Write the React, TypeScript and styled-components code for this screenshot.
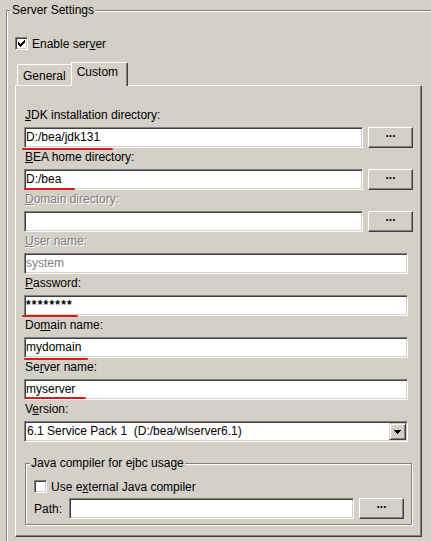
import styled, { createGlobalStyle } from 'styled-components'

const FACE = '#d4d0c8'
const SHADOW = '#808080'
const DARK = '#404040'
const HILITE = '#ffffff'
const MARKER = '#cf1f1f'

const GlobalStyle = createGlobalStyle`
  html, body {
    margin: 0;
    padding: 0;
    background: ${FACE};
  }
  body {
    font-family: 'Liberation Sans', Arial, sans-serif;
    font-size: 12px;
    color: #000;
    overflow: hidden;
  }
`

const Page = styled.div`
  width: 431px;
  height: 541px;
  box-sizing: border-box;
  overflow: hidden;
  padding: 10px 0 0 6px;
`

const GroupBox = styled.div`
  position: relative;
  border: 1px solid ${SHADOW};
  box-shadow: inset 1px 1px 0 ${HILITE}, 1px 1px 0 ${HILITE};
`

const ServerGroup = styled(GroupBox)`
  margin-right: -20px;
  padding: 24px 0 20px 8px;
`

const CompilerGroup = styled(GroupBox)`
  margin: 21px 1px 0 1px;
  padding: 14px 7px 5px 8px;
`

const Caption = styled.span`
  position: absolute;
  top: -8px;
  left: 4px;
  padding: 0 1px;
  line-height: 14px;
  background: ${FACE};
  white-space: nowrap;
`

const Key = styled.span`
  text-decoration: underline;
`

const CheckRow = styled.div`
  display: flex;
  align-items: center;
  gap: 4px;
  height: 17px;
  line-height: 14px;
`

const CheckBox = styled.span`
  flex: none;
  width: 13px;
  height: 13px;
  box-sizing: border-box;
  display: flex;
  align-items: center;
  justify-content: center;
  background: #fff;
  border: 1px solid;
  border-color: ${SHADOW} ${HILITE} ${HILITE} ${SHADOW};
  box-shadow: inset 1px 1px 0 ${DARK}, inset -1px -1px 0 ${FACE};
`

const TabStrip = styled.div`
  display: flex;
  align-items: flex-end;
  height: 23px;
  margin-top: 10px;
  padding-left: 2px;
`

const Tab = styled.div<{ $active?: boolean }>`
  position: relative;
  z-index: ${(p) => (p.$active ? 1 : 0)};
  box-sizing: border-box;
  height: ${(p) => (p.$active ? 24 : 21)}px;
  margin: ${(p) => (p.$active ? '0 0 -1px -2px' : '0')};
  padding: ${(p) => (p.$active ? '2px 9px 0 5px' : '4px 6px 0 5px')};
  line-height: 14px;
  background: ${FACE};
  border-top: 1px solid ${HILITE};
  border-left: 1px solid ${HILITE};
  border-right: 1px solid ${DARK};
  border-radius: 2px 2px 0 0;
  box-shadow: inset -1px 0 0 ${SHADOW};
`

const Panel = styled.div`
  width: 407px;
  box-sizing: border-box;
  padding: 20px 8px 11px 8px;
  border: 1px solid;
  border-color: ${HILITE} ${DARK} ${DARK} ${HILITE};
  box-shadow: inset -1px -1px 0 ${SHADOW};
`

const Field = styled.div`
  display: flex;
  flex-direction: column;
  gap: 5px;
  margin-top: 2px;
`

const Label = styled.div<{ $disabled?: boolean }>`
  height: 14px;
  line-height: 14px;
  padding-left: 1px;
  white-space: nowrap;
  color: ${(p) => (p.$disabled ? SHADOW : '#000')};
  text-shadow: ${(p) => (p.$disabled ? `1px 1px 0 ${HILITE}` : 'none')};
`

const InputRow = styled.div`
  display: flex;
  align-items: center;
  gap: 5px;
`

const InputWrap = styled.div<{ $wide?: boolean }>`
  position: relative;
  flex: 1;
  display: flex;
  margin-right: ${(p) => (p.$wide ? 5 : 0)}px;
`

const TextBox = styled.div<{ $disabled?: boolean; $secret?: boolean }>`
  flex: 1;
  height: 21px;
  box-sizing: border-box;
  padding: 0 1px;
  overflow: hidden;
  line-height: 19px;
  white-space: pre;
  background: #fff;
  color: ${(p) => (p.$disabled ? SHADOW : '#000')};
  font-weight: ${(p) => (p.$secret ? 'bold' : 'normal')};
  letter-spacing: ${(p) => (p.$secret ? '1.2px' : 'normal')};
  border: 1px solid;
  border-color: ${SHADOW} ${HILITE} ${HILITE} ${SHADOW};
  box-shadow: inset 1px 1px 0 ${DARK}, inset -1px -1px 0 ${FACE};
`

const Marker = styled.span<{ $left: number; $width: number; $drop: number }>`
  position: absolute;
  left: ${(p) => p.$left}px;
  bottom: ${(p) => -p.$drop}px;
  width: ${(p) => p.$width}px;
  height: 2px;
  border-radius: 1px;
  background: ${MARKER};
`

const BrowseButton = styled.div`
  flex: none;
  width: 45px;
  height: 21px;
  box-sizing: border-box;
  padding-bottom: 10px;
  display: flex;
  align-items: center;
  justify-content: center;
  font-weight: bold;
  line-height: 1;
  background: ${FACE};
  border: 1px solid;
  border-color: ${HILITE} ${DARK} ${DARK} ${HILITE};
  box-shadow: inset -1px -1px 0 ${SHADOW};
`

const ComboBox = styled.div`
  display: flex;
  align-items: center;
  height: 21px;
  box-sizing: border-box;
  margin-right: 5px;
  padding: 1px;
  background: #fff;
  border: 1px solid;
  border-color: ${SHADOW} ${HILITE} ${HILITE} ${SHADOW};
  box-shadow: inset 1px 1px 0 ${DARK}, inset -1px -1px 0 ${FACE};
`

const ComboValue = styled.span`
  flex: 1;
  padding-left: 1px;
  line-height: 17px;
  white-space: pre;
`

const ComboArrow = styled.span`
  flex: none;
  width: 17px;
  height: 17px;
  box-sizing: border-box;
  display: flex;
  align-items: center;
  justify-content: center;
  background: ${FACE};
  border: 1px solid;
  border-color: ${FACE} ${DARK} ${DARK} ${FACE};
  box-shadow: inset 1px 1px 0 ${HILITE}, inset -1px -1px 0 ${SHADOW};
`

const PathRow = styled.div`
  display: flex;
  align-items: center;
  gap: 5px;
  margin-top: 3px;
`

const PathLabel = styled.span`
  flex: none;
  width: 30px;
  line-height: 14px;
`

const CheckMark = () => (
  <svg width="7" height="7" viewBox="0 0 7 7" shapeRendering="crispEdges">
    <path
      d="M0 2h1v3h-1z M1 3h1v3h-1z M2 4h1v3h-1z M3 3h1v3h-1z M4 2h1v3h-1z M5 1h1v3h-1z M6 0h1v3h-1z"
      fill="#000"
    />
  </svg>
)

const DownArrow = () => (
  <svg width="7" height="4" viewBox="0 0 7 4" shapeRendering="crispEdges">
    <path d="M0 0h7v1h-1v1h-1v1h-1v1h-1v-1h-1v-1h-1v-1h-1z" fill="#000" />
  </svg>
)

type Mark = { left: number; width: number; drop: number }

type TextFieldProps = {
  label: React.ReactNode
  value?: string
  disabled?: boolean
  secret?: boolean
  browse?: boolean
  mark?: Mark
}

const TextField = ({ label, value = '', disabled, secret, browse, mark }: TextFieldProps) => (
  <Field>
    <Label $disabled={disabled}>{label}</Label>
    <InputRow>
      <InputWrap $wide={!browse}>
        <TextBox $disabled={disabled} $secret={secret}>{value}</TextBox>
        {mark && <Marker $left={mark.left} $width={mark.width} $drop={mark.drop} />}
      </InputWrap>
      {browse && <BrowseButton>...</BrowseButton>}
    </InputRow>
  </Field>
)

export default function App() {
  return (
    <>
      <GlobalStyle />
      <Page>
        <ServerGroup>
          <Caption>Server Settings</Caption>
          <CheckRow>
            <CheckBox><CheckMark /></CheckBox>
            <span>Enable ser<Key>v</Key>er</span>
          </CheckRow>
          <TabStrip>
            <Tab>General</Tab>
            <Tab $active>Custom</Tab>
          </TabStrip>
          <Panel>
            <TextField
              label={<><Key>J</Key>DK installation directory:</>}
              value="D:/bea/jdk131"
              browse
              mark={{ left: -2, width: 91, drop: 2 }}
            />
            <TextField
              label={<><Key>B</Key>EA home directory:</>}
              value="D:/bea"
              browse
              mark={{ left: 0, width: 51, drop: 0 }}
            />
            <TextField
              label={<><Key>D</Key>omain directory:</>}
              disabled
              browse
            />
            <TextField
              label={<><Key>U</Key>ser name:</>}
              value="system"
              disabled
            />
            <TextField
              label={<><Key>P</Key>assword:</>}
              value="********"
              secret
              mark={{ left: -2, width: 56, drop: 1 }}
            />
            <TextField
              label={<>Do<Key>m</Key>ain name:</>}
              value="mydomain"
              mark={{ left: 0, width: 64, drop: 2 }}
            />
            <TextField
              label={<>Se<Key>r</Key>ver name:</>}
              value="myserver"
              mark={{ left: 1, width: 61, drop: -1 }}
            />
            <Field>
              <Label>V<Key>e</Key>rsion:</Label>
              <ComboBox>
                <ComboValue>6.1 Service Pack 1  (D:/bea/wlserver6.1)</ComboValue>
                <ComboArrow><DownArrow /></ComboArrow>
              </ComboBox>
            </Field>
            <CompilerGroup>
              <Caption>Java compiler for ejbc usage</Caption>
              <CheckRow>
                <CheckBox />
                <span>Use e<Key>x</Key>ternal Java compiler</span>
              </CheckRow>
              <PathRow>
                <PathLabel>Path:</PathLabel>
                <InputWrap>
                  <TextBox />
                </InputWrap>
                <BrowseButton>...</BrowseButton>
              </PathRow>
            </CompilerGroup>
          </Panel>
        </ServerGroup>
      </Page>
    </>
  )
}
